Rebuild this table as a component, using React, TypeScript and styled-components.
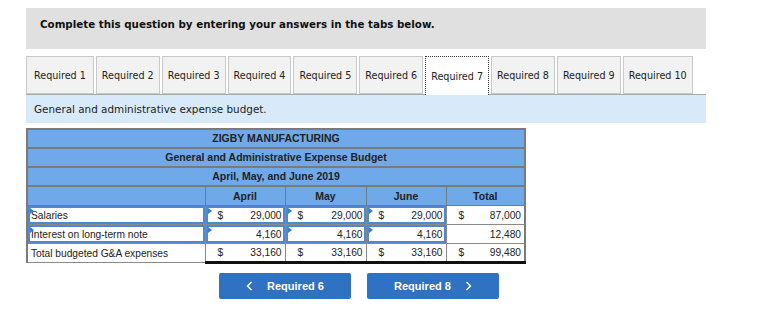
import React from "react";
import styled, { createGlobalStyle } from "styled-components";

const Global = createGlobalStyle`
  html, body { margin: 0; padding: 0; background: #fff; }
  body { margin: 8px; font-family: "DejaVu Sans", Verdana, sans-serif; }
`;

const Page = styled.div`
  padding-left: 18px;
  width: 680px;
`;

const Banner = styled.div`
  box-sizing: border-box;
  height: 41px;
  background: #e0e0e0;
  padding: 10px 14px 0;
  font-weight: bold;
  font-size: 10.3px;
  color: #111;
`;

const TabRow = styled.div`
  display: flex;
  align-items: flex-end;
  gap: 2px;
  margin-top: 6px;
  height: 39px;
  border-bottom: 1px solid #a8a8a8;
`;

const Tab = styled.div<{ $active?: boolean }>`
  box-sizing: border-box;
  height: ${(p) => (p.$active ? "39px" : "38px")};
  margin-bottom: ${(p) => (p.$active ? "-1px" : "0")};
  padding: 0 5px;
  display: flex;
  align-items: center;
  font-size: 9.6px;
  color: #222;
  background: ${(p) => (p.$active ? "#fff" : "#f2f2f2")};
  border: ${(p) => (p.$active ? "1px dotted #333" : "1px solid #c9c9c9")};
  border-bottom: ${(p) => (p.$active ? "none" : "1px solid #c9c9c9")};
  white-space: nowrap;
  &:first-child { padding: 0 7px; }
`;

const Instruction = styled.div`
  box-sizing: border-box;
  height: 28px;
  background: #d8eaf9;
  padding: 8px 8px 0;
  font-size: 10.4px;
  color: #222;
`;

const Table = styled.table`
  margin-top: 5px;
  width: 500px;
  border-collapse: collapse;
  table-layout: fixed;
  font-family: "Liberation Sans", Arial, sans-serif;
  font-size: 10.2px;
  line-height: 13px;
  color: #222;
  border-left: 2px solid #7a7a7a;
  border-right: 2px solid #7a7a7a;
  border-top: 2px solid #7a7a7a;
`;

const TitleCell = styled.td`
  background: #6fa9e9;
  text-align: center;
  font-weight: bold;
  font-size: 10.5px;
  height: 17px;
  padding: 0;
  border-bottom: 2px solid #7a7a7a;
`;

const HeadCell = styled.td`
  background: #6fa9e9;
  text-align: center;
  font-weight: bold;
  font-size: 10.5px;
  height: 18px;
  padding: 0;
  border-bottom: 1px solid #7a7a7a;
  border-left: 1px solid #7a7a7a;
  &:first-child { border-left: none; }
`;

const LabelCell = styled.td<{ $input?: boolean }>`
  position: relative;
  height: 18px;
  padding: 0 3px;
  background: #fff;
  border: 1px solid #8a8a8a;
  box-shadow: ${(p) => (p.$input ? "inset 0 0 0 2px #4f89cc" : "none")};
  white-space: nowrap;
`;

const NumCell = styled.td<{ $input?: boolean; $total?: boolean }>`
  position: relative;
  height: ${(p) => (p.$total ? "16px" : "18px")};
  padding: 0 3px 0 12px;
  background: #fff;
  border: 1px solid #8a8a8a;
  border-bottom: ${(p) => (p.$total ? "3px solid #111" : "1px solid #8a8a8a")};
  box-shadow: ${(p) => (p.$input ? "inset 0 0 0 2px #4f89cc" : "none")};
`;

const CellInner = styled.div`
  display: flex;
  justify-content: space-between;
  align-items: center;
`;

const Marker = styled.span`
  position: absolute;
  left: 2px;
  top: 2px;
  width: 0;
  height: 0;
  border-top: 3px solid transparent;
  border-bottom: 3px solid transparent;
  border-left: 4px solid #2f7fd8;
`;

const ButtonRow = styled.div`
  display: flex;
  gap: 16px;
  margin-top: 9px;
  padding-left: 193px;
`;

const NavButton = styled.button`
  box-sizing: border-box;
  width: 132px;
  height: 26px;
  border: none;
  border-radius: 2px;
  background: #2f72c2;
  color: #fff;
  font-family: "Liberation Sans", Arial, sans-serif;
  font-weight: bold;
  font-size: 11px;
  display: flex;
  align-items: center;
  justify-content: center;
  gap: 14px;
  padding: 0;
`;

const Chevron = styled.svg`
  width: 7px;
  height: 10px;
`;

type Row = {
  label: string;
  input?: boolean;
  total?: boolean;
  dollar: boolean;
  values: string[];
};

const rows: Row[] = [
  { label: "Salaries", input: true, dollar: true, values: ["29,000", "29,000", "29,000", "87,000"] },
  { label: "Interest on long-term note", input: true, dollar: false, values: ["4,160", "4,160", "4,160", "12,480"] },
  { label: "Total budgeted G&A expenses", total: true, dollar: true, values: ["33,160", "33,160", "33,160", "99,480"] },
];

const tabs = Array.from({ length: 10 }, (_, i) => `Required ${i + 1}`);

export default function App() {
  return (
    <>
      <Global />
      <Page>
        <Banner>Complete this question by entering your answers in the tabs below.</Banner>
        <TabRow>
          {tabs.map((t, i) => (
            <Tab key={t} $active={i === 6}>{t}</Tab>
          ))}
        </TabRow>
        <Instruction>General and administrative expense budget.</Instruction>
        <Table>
          <colgroup>
            <col style={{ width: 178 }} />
            <col style={{ width: 80 }} />
            <col style={{ width: 81 }} />
            <col style={{ width: 80 }} />
            <col style={{ width: 79 }} />
          </colgroup>
          <tbody>
            <tr><TitleCell colSpan={5}>ZIGBY MANUFACTURING</TitleCell></tr>
            <tr><TitleCell colSpan={5}>General and Administrative Expense Budget</TitleCell></tr>
            <tr><TitleCell colSpan={5}>April, May, and June 2019</TitleCell></tr>
            <tr>
              <HeadCell />
              <HeadCell>April</HeadCell>
              <HeadCell>May</HeadCell>
              <HeadCell>June</HeadCell>
              <HeadCell>Total</HeadCell>
            </tr>
            {rows.map((r) => (
              <tr key={r.label}>
                <LabelCell $input={r.input}>
                  {r.input && <Marker />}
                  {r.label}
                </LabelCell>
                {r.values.map((v, i) => {
                  const isInput = r.input && i < 3;
                  return (
                    <NumCell key={i} $input={isInput} $total={r.total}>
                      {isInput && <Marker />}
                      <CellInner>
                        <span>{r.dollar ? "$" : ""}</span>
                        <span>{v}</span>
                      </CellInner>
                    </NumCell>
                  );
                })}
              </tr>
            ))}
          </tbody>
        </Table>
        <ButtonRow>
          <NavButton>
            <Chevron viewBox="0 0 7 10"><path d="M5.5 1 L1.5 5 L5.5 9" fill="none" stroke="#fff" strokeWidth="1.4" /></Chevron>
            Required 6
          </NavButton>
          <NavButton>
            Required 8
            <Chevron viewBox="0 0 7 10"><path d="M1.5 1 L5.5 5 L1.5 9" fill="none" stroke="#fff" strokeWidth="1.4" /></Chevron>
          </NavButton>
        </ButtonRow>
      </Page>
    </>
  );
}
